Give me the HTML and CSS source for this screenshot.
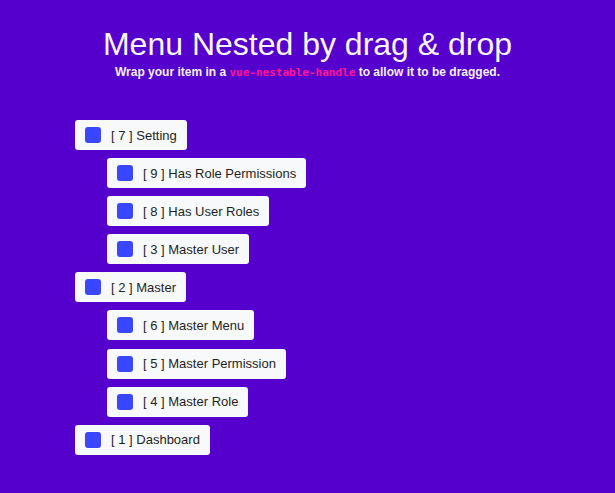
FILE: index.html
```html
<!DOCTYPE html>
<html>
<head>
<meta charset="utf-8">
<link rel="stylesheet" href="styles.css">
</head>
<body>
<div class="page">
  <header class="head">
    <h1 class="title">Menu Nested by drag &amp; drop</h1>
    <p class="sub">Wrap your item in a <code class="code">vue-nestable-handle</code> to allow it to be dragged.</p>
  </header>
  <ul class="list">
    <li class="node">
      <div class="item"><span class="handle"></span><span class="label">[ 7 ] Setting</span></div>
      <ul class="list child">
        <li class="node"><div class="item"><span class="handle"></span><span class="label">[ 9 ] Has Role Permissions</span></div></li>
        <li class="node"><div class="item"><span class="handle"></span><span class="label">[ 8 ] Has User Roles</span></div></li>
        <li class="node"><div class="item"><span class="handle"></span><span class="label">[ 3 ] Master User</span></div></li>
      </ul>
    </li>
    <li class="node">
      <div class="item"><span class="handle"></span><span class="label">[ 2 ] Master</span></div>
      <ul class="list child">
        <li class="node"><div class="item"><span class="handle"></span><span class="label">[ 6 ] Master Menu</span></div></li>
        <li class="node"><div class="item"><span class="handle"></span><span class="label">[ 5 ] Master Permission</span></div></li>
        <li class="node"><div class="item"><span class="handle"></span><span class="label">[ 4 ] Master Role</span></div></li>
      </ul>
    </li>
    <li class="node">
      <div class="item"><span class="handle"></span><span class="label">[ 1 ] Dashboard</span></div>
    </li>
  </ul>
</div>
</body>
</html>
```
FILE: styles.css
```css
* { box-sizing: border-box; }
html, body { margin: 0; padding: 0; }
body {
  background: #5500cc;
  font-family: "Liberation Sans", Arial, sans-serif;
  width: 615px;
  height: 493px;
  overflow: hidden;
}
.page { padding: 26px 0 0 75px; }
.head { margin-left: -75px; text-align: center; }
.title {
  margin: 0;
  color: #f8f6fb;
  font-weight: normal;
  font-size: 32px;
  line-height: 36px;
}
.sub {
  margin: 2px 0 0;
  color: #f4f2f8;
  font-weight: bold;
  font-size: 12px;
  line-height: 16px;
}
.code {
  font-family: "DejaVu Sans Mono", monospace;
  font-weight: bold;
  font-size: 11px;
  color: #ff1496;
}
.list {
  list-style: none;
  margin: 0;
  padding: 0;
}
.page > .list { margin-top: 39px; }
.child { padding-left: 32px; }
.node { display: flex; flex-direction: column; align-items: flex-start; }
.item {
  display: flex;
  align-items: center;
  height: 30px;
  margin-bottom: 8.1px;
  padding: 0 10px;
  background: #f7f9fb;
  border-radius: 3px;
}
.handle {
  width: 16px;
  height: 16px;
  border-radius: 3px;
  background: #3a46ff;
  margin-right: 10px;
}
.label {
  font-size: 13px;
  color: #1e1e24;
}
```
